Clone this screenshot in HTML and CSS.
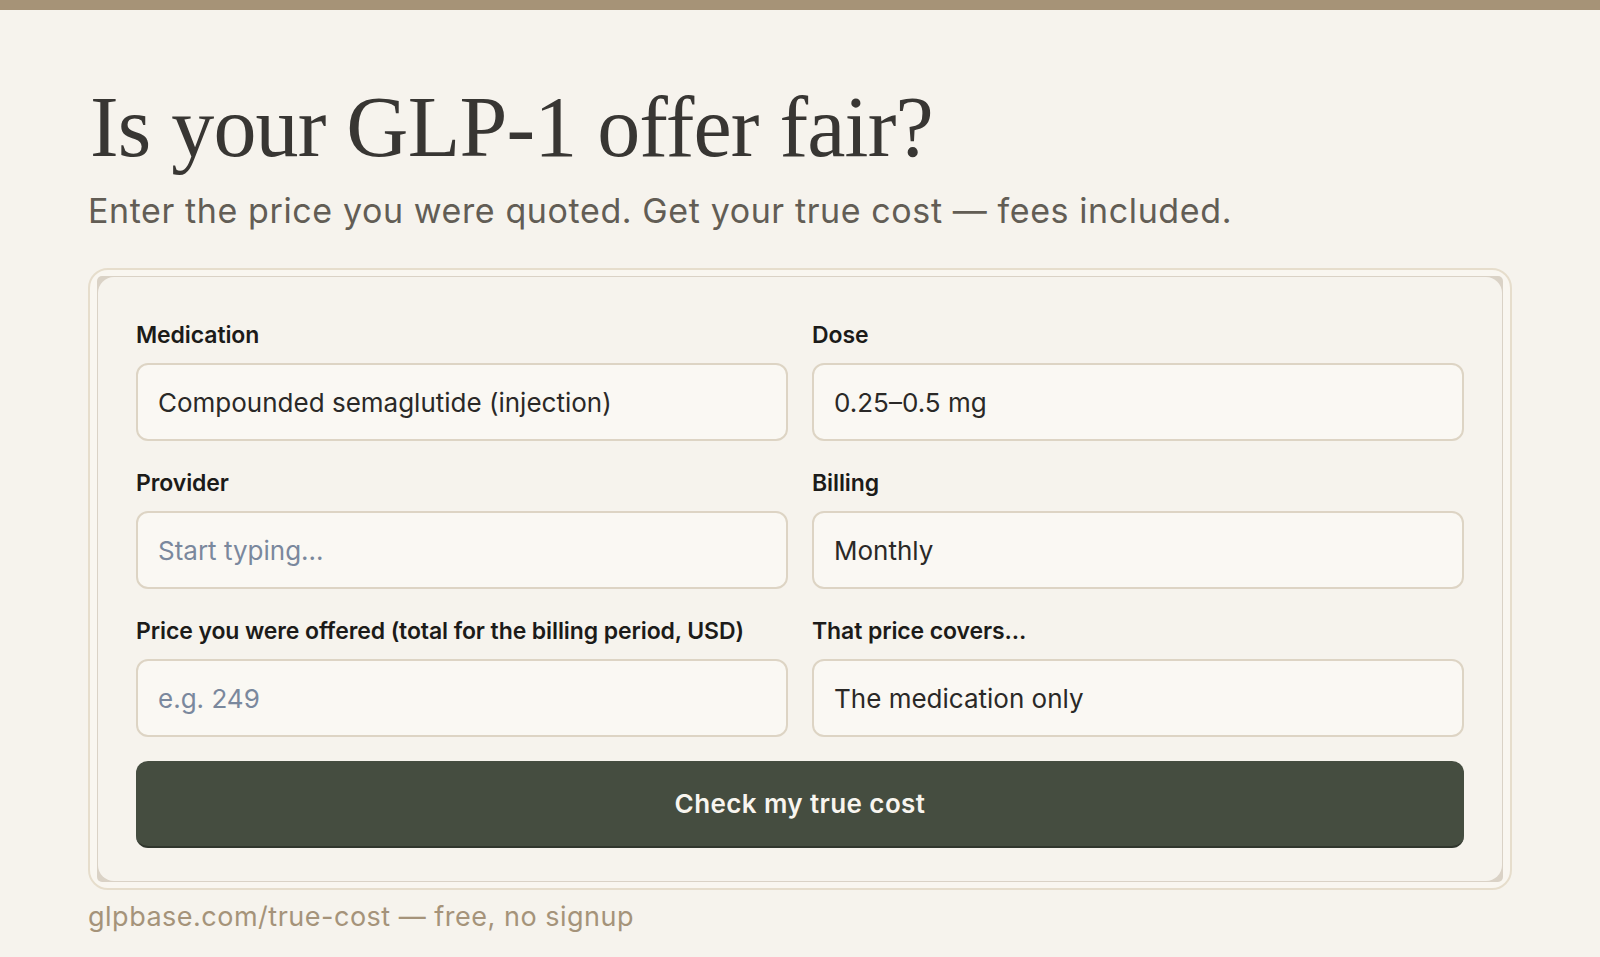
FILE: index.html
```html
<!DOCTYPE html>
<html lang="en">
<head>
<meta charset="utf-8">
<title>Is your GLP-1 offer fair?</title>
<link rel="stylesheet" href="styles.css">
</head>
<body>
<div class="topbar"></div>
<main class="page">
  <h1 class="title">Is your GLP-1 offer fair?</h1>
  <p class="subtitle">Enter the price you were quoted. Get your true cost — fees included.</p>
  <div class="card">
    <div class="frame">
      <form class="panel">
        <div class="grid">
          <label class="field">
            <span class="label">Medication</span>
            <input class="input" type="text" value="Compounded semaglutide (injection)">
          </label>
          <label class="field">
            <span class="label">Dose</span>
            <input class="input" type="text" value="0.25–0.5 mg">
          </label>
          <label class="field">
            <span class="label">Provider</span>
            <input class="input" type="text" placeholder="Start typing...">
          </label>
          <label class="field">
            <span class="label">Billing</span>
            <input class="input" type="text" value="Monthly">
          </label>
          <label class="field">
            <span class="label">Price you were offered (total for the billing period, USD)</span>
            <input class="input" type="text" placeholder="e.g. 249">
          </label>
          <label class="field">
            <span class="label">That price covers...</span>
            <input class="input" type="text" value="The medication only">
          </label>
        </div>
        <button class="cta" type="button">Check my true cost</button>
      </form>
    </div>
  </div>
  <p class="footer">glpbase.com/true-cost — free, no signup</p>
</main>
</body>
</html>
```
FILE: styles.css
```css
* { box-sizing: border-box; }

html, body {
  margin: 0;
  padding: 0;
  background: #f6f3ed;
}

body {
  font-family: Inter, "Noto Sans", sans-serif;
  color: #1f1e1c;
}

.topbar {
  height: 10px;
  background: #a69377;
}

.page {
  padding: 0 88px;
}

.title {
  margin: 74px 0 0 2px;
  font-family: "Liberation Serif", "DejaVu Serif", serif;
  font-weight: 400;
  font-size: 86px;
  line-height: 86px;
  letter-spacing: -0.8px;
  color: #383633;
}

.subtitle {
  margin: 21px 0 0 0;
  font-size: 34px;
  line-height: 40px;
  font-weight: 400;
  letter-spacing: 0.6px;
  color: #625d55;
}

.card {
  margin-top: 37px;
  border: 2px solid #e6ddcc;
  border-radius: 20px;
  padding: 6px 7px;
  background: #f9f6f0;
}

.frame {
  background: #dad2c6;
  border-radius: 5px;
  padding: 1px;
}

.panel {
  background: #f6f3ed;
  border-radius: 16px;
  padding: 44px 38px 33px 38px;
  margin: 0;
}

.grid {
  display: grid;
  grid-template-columns: 1fr 1fr;
  column-gap: 24px;
  row-gap: 28px;
}

.field {
  display: flex;
  flex-direction: column;
}

.label {
  font-size: 23px;
  line-height: 28px;
  font-weight: 600;
  letter-spacing: -0.1px;
  color: #1c1b19;
  margin-bottom: 14px;
  white-space: nowrap;
}

.input {
  height: 78px;
  width: 100%;
  border: 2px solid #ddd4c4;
  border-radius: 12px;
  background: #faf8f3;
  padding: 0 20px;
  font-family: Inter, "Noto Sans", sans-serif;
  font-size: 26px;
  color: #2a2927;
  outline: none;
}

.input::placeholder {
  color: #7a889d;
  opacity: 1;
}

.cta {
  display: block;
  width: 100%;
  height: 87px;
  margin-top: 24px;
  border: none;
  border-bottom: 2px solid #30362d;
  border-radius: 12px;
  background: #454d40;
  color: #f8f5ef;
  font-family: Inter, "Noto Sans", sans-serif;
  font-size: 26px;
  font-weight: 600;
  letter-spacing: 0.4px;
  cursor: pointer;
}

.footer {
  margin: 11px 0 0 0;
  font-size: 27px;
  line-height: 32px;
  letter-spacing: 0.5px;
  color: #a5937a;
}
```
